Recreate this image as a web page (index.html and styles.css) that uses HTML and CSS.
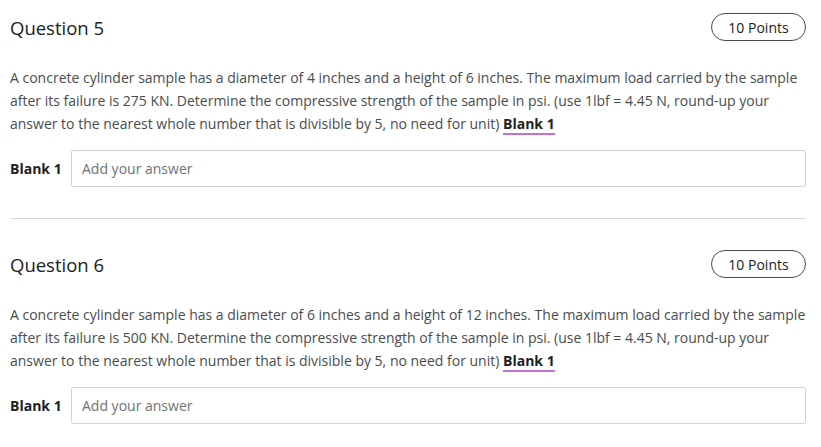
FILE: index.html
```html
<!DOCTYPE html>
<html>
<head>
<meta charset="utf-8">
<link rel="stylesheet" href="styles.css">
</head>
<body>
<div class="page">
  <section class="question">
    <div class="q-head">
      <h2 class="q-title">Question 5</h2>
      <span class="points">10 Points</span>
    </div>
    <p class="q-text">A concrete cylinder sample has a diameter of 4 inches and a height of 6 inches. The maximum load carried by the sample after its failure is 275 KN. Determine the compressive strength of the sample in psi. (use 1lbf = 4.45 N, round-up your answer to the nearest whole number that is divisible by 5, no need for unit) <span class="blank-ref">Blank 1</span></p>
    <div class="answer-row">
      <label class="blank-label">Blank 1</label>
      <div class="answer-input">Add your answer</div>
    </div>
  </section>
  <hr class="sep">
  <section class="question">
    <div class="q-head">
      <h2 class="q-title">Question 6</h2>
      <span class="points">10 Points</span>
    </div>
    <p class="q-text">A concrete cylinder sample has a diameter of 6 inches and a height of 12 inches. The maximum load carried by the sample after its failure is 500 KN. Determine the compressive strength of the sample in psi. (use 1lbf = 4.45 N, round-up your answer to the nearest whole number that is divisible by 5, no need for unit) <span class="blank-ref">Blank 1</span></p>
    <div class="answer-row">
      <label class="blank-label">Blank 1</label>
      <div class="answer-input">Add your answer</div>
    </div>
  </section>
</div>
</body>
</html>
```
FILE: styles.css
```css
html, body {
  margin: 0;
  padding: 0;
  background: #ffffff;
}
body {
  font-family: "Open Sans", "Noto Sans", sans-serif;
  color: #494c4e;
}
.page {
  width: 796px;
  padding: 13px 0 0 10px;
}
.q-head {
  display: flex;
  justify-content: space-between;
  align-items: center;
  height: 28px;
}
.q-title {
  margin: 0;
  font-size: 18.5px;
  font-weight: 400;
  color: #202122;
}
.points {
  box-sizing: border-box;
  height: 28px;
  width: 95px;
  border: 1px solid #494c4e;
  border-radius: 14px;
  font-size: 14px;
  color: #202122;
  display: flex;
  align-items: center;
  justify-content: center;
}
.q-text {
  margin: 25px 0 0 0;
  font-size: 14px;
  line-height: 23px;
  color: #494c4e;
}
.blank-ref {
  font-weight: 700;
  color: #202122;
  border-bottom: 2px solid #c56fd8;
}
.answer-row {
  display: flex;
  align-items: center;
  margin-top: 15px;
}
.blank-label {
  font-size: 14px;
  font-weight: 700;
  color: #202122;
  width: 61px;
}
.answer-input {
  flex: 1;
  box-sizing: border-box;
  height: 37px;
  border: 1px solid #cdd5dc;
  border-radius: 2px;
  padding: 0 10px;
  font-size: 14px;
  color: #6e7376;
  display: flex;
  align-items: center;
}
.sep {
  margin: 31px 0 31px 0;
  border: 0;
  border-top: 1px solid #d3d9e3;
  height: 0;
}
```
